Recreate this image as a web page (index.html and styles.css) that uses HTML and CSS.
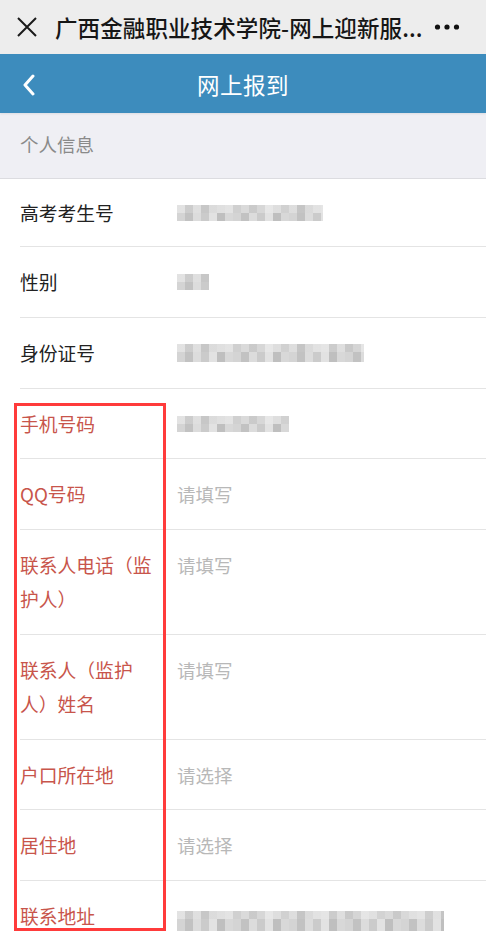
FILE: index.html
```html
<!DOCTYPE html>
<html lang="zh-CN">
<head>
<meta charset="utf-8">
<title>网上报到</title>
<link rel="stylesheet" href="styles.css">
</head>
<body>
<div class="page">
  <header class="topbar">
    <svg class="close-icon" width="22" height="22" viewBox="0 0 22 22"><path d="M2 2 L20 20 M20 2 L2 20" stroke="#1a1a1a" stroke-width="2" fill="none"/></svg>
    <div class="topbar-title">广西金融职业技术学院-网上迎新服...</div>
    <svg class="more-icon" width="26" height="8" viewBox="0 0 26 8"><circle cx="3.5" cy="4" r="2.6" fill="#111"/><circle cx="13" cy="4" r="2.6" fill="#111"/><circle cx="22.5" cy="4" r="2.6" fill="#111"/></svg>
  </header>
  <nav class="navbar">
    <svg class="back-icon" width="14" height="22" viewBox="0 0 14 22"><path d="M11 2 L3 11 L11 20" stroke="#fff" stroke-width="3" fill="none" stroke-linecap="round" stroke-linejoin="round"/></svg>
    <div class="navbar-title">网上报到</div>
  </nav>
  <div class="section-title">个人信息</div>
  <div class="list">
    <div class="row first">
      <div class="label">高考考生号</div>
      <div class="value"><span class="mosaic m-exam"></span></div>
    </div>
    <div class="row">
      <div class="label">性别</div>
      <div class="value"><span class="mosaic m-sex"></span></div>
    </div>
    <div class="row">
      <div class="label">身份证号</div>
      <div class="value"><span class="mosaic m-id"></span></div>
    </div>
    <div class="row">
      <div class="label red">手机号码</div>
      <div class="value"><span class="mosaic m-phone"></span></div>
    </div>
    <div class="row">
      <div class="label red">QQ号码</div>
      <div class="value placeholder">请填写</div>
    </div>
    <div class="row">
      <div class="label red">联系人电话（监护人）</div>
      <div class="value placeholder">请填写</div>
    </div>
    <div class="row">
      <div class="label red">联系人（监护人）姓名</div>
      <div class="value placeholder">请填写</div>
    </div>
    <div class="row">
      <div class="label red">户口所在地</div>
      <div class="value placeholder">请选择</div>
    </div>
    <div class="row">
      <div class="label red">居住地</div>
      <div class="value placeholder">请选择</div>
    </div>
    <div class="row">
      <div class="label red">联系地址</div>
      <div class="value"><span class="mosaic m-addr"></span></div>
    </div>
  </div>
  <div class="highlight-box"></div>
</div>
</body>
</html>
```
FILE: styles.css
```css
* { box-sizing: border-box; }
html, body {
  margin: 0;
  padding: 0;
  background: #fff;
}
body {
  font-family: "Noto Sans CJK SC", "Noto Sans", sans-serif;
  overflow: hidden;
}
.page {
  position: relative;
  width: 486px;
  height: 931px;
  overflow: hidden;
}
.topbar {
  height: 54px;
  background: #ededed;
  display: flex;
  align-items: center;
  padding: 0 0 0 16px;
}
.close-icon { flex: none; }
.topbar-title {
  margin-left: 17px;
  font-size: 22.5px;
  font-weight: 500;
  color: #161616;
  white-space: nowrap;
  letter-spacing: 0.1px;
  flex: 1;
}
.more-icon { flex: none; margin-right: 26px; }
.navbar {
  height: 59px;
  background: #3d8cbd;
  display: flex;
  align-items: center;
  justify-content: center;
  position: relative;
  box-shadow: 0 1px 2px rgba(0,0,0,0.08);
}
.back-icon {
  position: absolute;
  left: 22px;
  top: 20px;
}
.navbar-title {
  color: #fff;
  font-size: 22.5px;
  letter-spacing: 0.5px;
}
.section-title {
  height: 66px;
  background: #efeff4;
  border-bottom: 1px solid #dcdce0;
  padding-left: 20px;
  padding-bottom: 3px;
  display: flex;
  align-items: center;
  font-size: 18.5px;
  color: #8a8a8a;
}
.list { background: #fff; }
.row {
  display: flex;
  margin-left: 20px;
  padding: 18px 0 17.75px;
  border-bottom: 1px solid #e4e4e4;
}
.row.first { padding-top: 16.5px; padding-bottom: 16.5px; }
.label {
  flex: none;
  width: 157px;
  padding-right: 17px;
  font-size: 18.8px;
  line-height: 34px;
  color: #222;
}
.label.red { color: #c8554b; }
.value {
  flex: 1;
  font-size: 18.5px;
  line-height: 34px;
  color: #333;
  display: flex;
  align-items: center;
  height: 34px;
}
.placeholder { color: #b8b8b8; }
.mosaic {
  display: block;
  height: 16px;
  filter: blur(0.6px);
  background:
    repeating-linear-gradient(90deg,
      #d4d4d4 0 8px, #c2c2c2 8px 16px, #dcdcdc 16px 24px, #cbcbcb 24px 32px,
      #e2e2e2 32px 40px, #bfbfbf 40px 48px, #d8d8d8 48px 56px);
}
.mosaic::after {
  content: "";
  display: block;
  height: 8px;
  background:
    repeating-linear-gradient(90deg,
      #e6e6e6 0 8px, #cfcfcf 8px 16px, #e0e0e0 16px 24px, #c6c6c6 24px 32px,
      #dadada 32px 40px, #e8e8e8 40px 48px);
  opacity: 0.8;
}
.m-exam { width: 146px; }
.m-sex { width: 32px; }
.m-id { width: 187px; height: 18px; }
.m-phone { width: 112px; }
.m-addr { width: 267px; height: 20px; margin-top: 10px; }
.highlight-box {
  position: absolute;
  left: 14px;
  top: 403px;
  width: 152px;
  height: 528px;
  border: 3px solid #ff3b3b;
}
```
